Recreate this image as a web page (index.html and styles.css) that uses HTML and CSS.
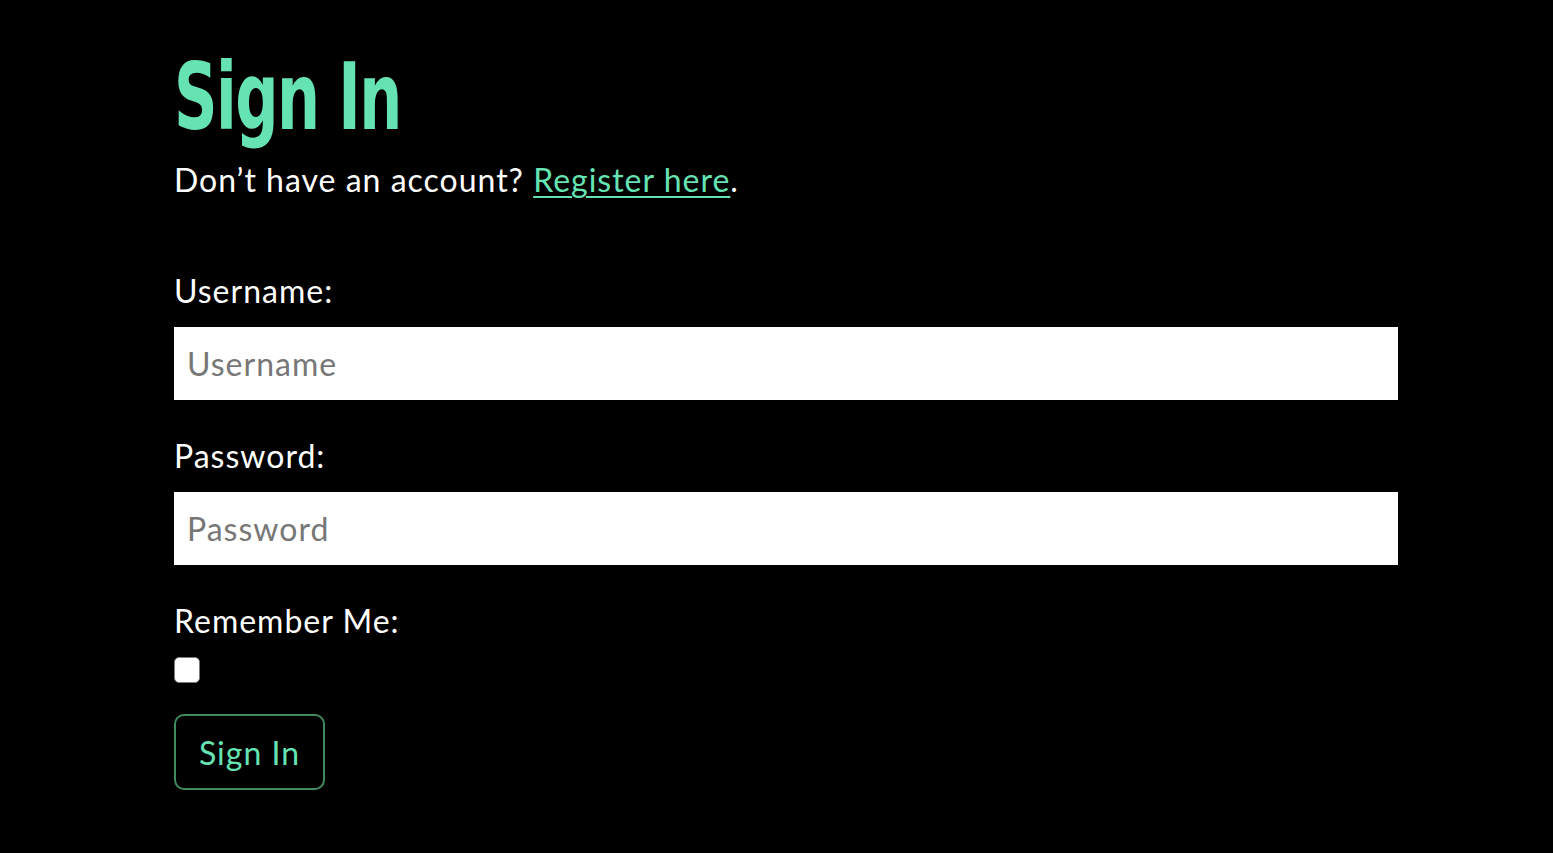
FILE: index.html
```html
<!DOCTYPE html>
<html lang="en">
<head>
<meta charset="utf-8">
<title>Sign In</title>
<link rel="stylesheet" href="styles.css">
</head>
<body>
<main class="page">
  <h1 class="title">Sign In</h1>
  <p class="lead">Don’t have an account? <a class="link" href="#">Register here</a>.</p>
  <form class="form">
    <div class="field">
      <label class="label" for="u">Username:</label>
      <input class="input" id="u" type="text" placeholder="Username">
    </div>
    <div class="field">
      <label class="label" for="p">Password:</label>
      <input class="input" id="p" type="password" placeholder="Password">
    </div>
    <div class="field field-check">
      <label class="label" for="r">Remember Me:</label>
      <input class="check" id="r" type="checkbox">
    </div>
    <button class="btn" type="button">Sign In</button>
  </form>
</main>
</body>
</html>
```
FILE: styles.css
```css
html, body {
  margin: 0;
  padding: 0;
  background: #000;
}
body {
  font-family: Lato, "Noto Sans", sans-serif;
  color: #fff;
  letter-spacing: 1px;
}
.page {
  width: 1224px;
  margin-left: 174px;
  padding-top: 50px;
}
.title {
  margin: 0;
  font-family: "DejaVu Sans Condensed", "Liberation Sans", sans-serif;
  font-weight: 700;
  font-size: 92px;
  line-height: 96px;
  color: #66e3b3;
  letter-spacing: -2px;
  transform: scaleX(0.73);
  transform-origin: left center;
}
.lead {
  margin: 14px 0 0;
  font-size: 32px;
  line-height: 40px;
}
.link {
  color: #66e3b3;
  text-decoration: underline;
  text-decoration-thickness: 2px;
  text-underline-offset: 4px;
}
.form {
  margin-top: 71px;
  display: flex;
  flex-direction: column;
  align-items: flex-start;
}
.field {
  display: flex;
  flex-direction: column;
  align-items: flex-start;
  align-self: stretch;
  margin-bottom: 36px;
}
.field-check {
  margin-bottom: 31px;
}
.label {
  font-size: 32px;
  line-height: 40px;
  margin-bottom: 16px;
}
.input {
  box-sizing: border-box;
  width: 100%;
  height: 73px;
  border: 0;
  border-radius: 0;
  padding: 0 13px;
  font-family: Lato, "Noto Sans", sans-serif;
  font-size: 32px;
  letter-spacing: 1px;
  color: #333;
  background: #fff;
  outline: none;
}
.input::placeholder {
  color: #777;
}
.check {
  appearance: none;
  width: 26px;
  height: 26px;
  margin: 0;
  border: 1.5px solid #7a7a7a;
  border-radius: 5px;
  background: #fff;
}
.btn {
  width: 151px;
  height: 76px;
  background: transparent;
  border: 2px solid #3f8a5f;
  border-radius: 10px;
  color: #66e3b3;
  font-family: Lato, "Noto Sans", sans-serif;
  font-size: 32px;
  letter-spacing: 1px;
  padding: 0;
}
```
